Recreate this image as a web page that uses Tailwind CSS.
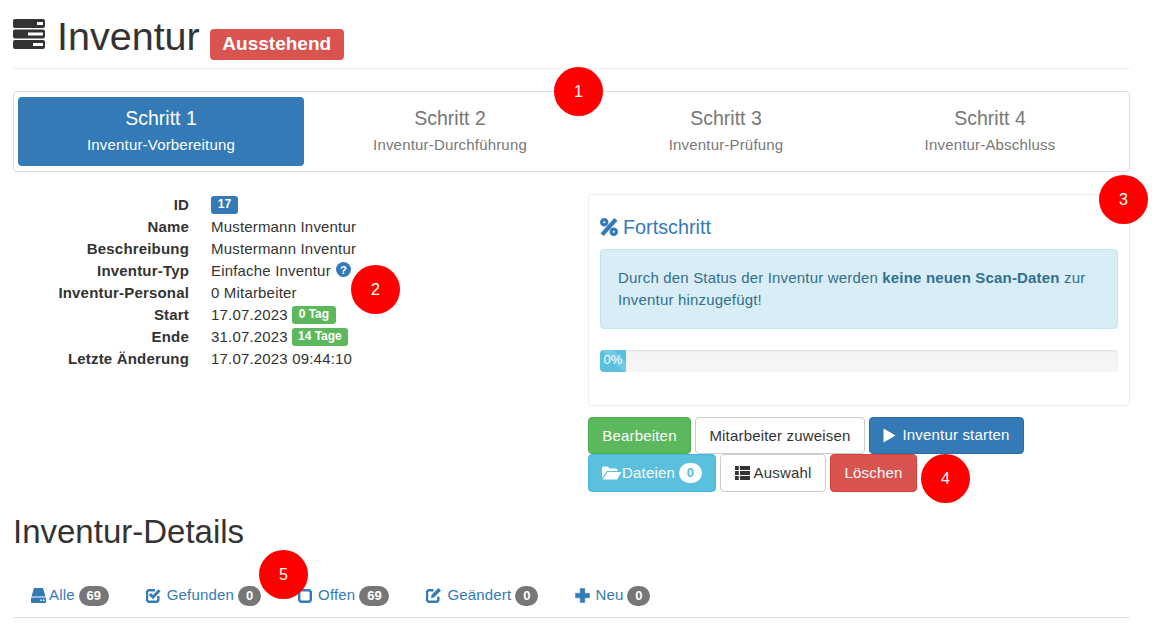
<!DOCTYPE html>
<html lang="de">
<head>
<meta charset="utf-8">
<script src="https://cdn.jsdelivr.net/npm/@tailwindcss/browser@4"></script>
</head>
<body class="bg-white overflow-hidden font-['Liberation_Sans',Arial,sans-serif] text-[15px] tracking-[0.18px] text-[#333]">
<div class="relative w-[1152px] h-[639px] overflow-hidden">
  <div class="w-[1117px] ml-[13px]">
    <!-- header -->
    <div class="h-[69px] border-b border-[#eee] flex items-start pt-[12px]">
      <svg class="w-[32px] h-[30px] mt-[7px]" viewBox="0 0 32 30"><path fill="#333" fill-rule="evenodd" d="M2 0H30a2 2 0 0 1 2 2V7a2 2 0 0 1-2 2H2a2 2 0 0 1-2-2V2a2 2 0 0 1 2-2ZM24 3v3h6V3ZM2 10.500H30a2 2 0 0 1 2 2V17.500a2 2 0 0 1-2 2H2a2 2 0 0 1-2-2V12.500a2 2 0 0 1 2-2ZM15 13.500v3h15v-3ZM2 21H30a2 2 0 0 1 2 2V28a2 2 0 0 1-2 2H2a2 2 0 0 1-2-2V23a2 2 0 0 1 2-2ZM20 24v3h10v-3Z"/></svg>
      <h1 class="text-[39.500px] tracking-normal leading-[48px] ml-[12px] text-[#333]">Inventur</h1>
      <span class="ml-[10px] mt-[17px] h-[31px] w-[134px] rounded-[4px] bg-[#d9534f] text-white font-bold text-[19px] tracking-normal leading-[29px] text-center">Ausstehend</span>
    </div>
    <!-- steps -->
    <div class="mt-[22px] h-[81px] border border-[#ddd] rounded-[4px] py-[5px] pl-[4px] flex">
      <div class="w-[286px] h-[69px] rounded-[4px] bg-[#337ab7] text-white text-center pt-[9px]">
        <div class="text-[19.500px] tracking-normal leading-[24px]">Schritt 1</div>
        <div class="leading-[20px] mt-[5px]">Inventur-Vorbereitung</div>
      </div>
      <div class="w-[292px] text-[#777] text-center pt-[9px]">
        <div class="text-[19.500px] tracking-normal leading-[24px]">Schritt 2</div>
        <div class="leading-[20px] mt-[5px]">Inventur-Durchführung</div>
      </div>
      <div class="w-[260px] text-[#777] text-center pt-[9px]">
        <div class="text-[19.500px] tracking-normal leading-[24px]">Schritt 3</div>
        <div class="leading-[20px] mt-[5px]">Inventur-Prüfung</div>
      </div>
      <div class="w-[268px] text-[#777] text-center pt-[9px]">
        <div class="text-[19.500px] tracking-normal leading-[24px]">Schritt 4</div>
        <div class="leading-[20px] mt-[5px]">Inventur-Abschluss</div>
      </div>
    </div>
    <!-- two columns -->
    <div class="flex mt-[22px]">
      <div class="w-[575px] leading-[22px]">
        <div class="flex"><div class="w-[176px] text-right font-bold">ID</div><div class="ml-[22px] flex items-center"><span class="h-[18px] w-[27px] rounded-[3px] bg-[#337ab7] text-white text-[12px] tracking-normal font-bold leading-[17px] text-center">17</span></div></div>
        <div class="flex"><div class="w-[176px] text-right font-bold">Name</div><div class="ml-[22px]">Mustermann Inventur</div></div>
        <div class="flex"><div class="w-[176px] text-right font-bold">Beschreibung</div><div class="ml-[22px]">Mustermann Inventur</div></div>
        <div class="flex"><div class="w-[176px] text-right font-bold">Inventur-Typ</div><div class="ml-[22px] flex items-center">Einfache Inventur
          <svg class="w-[15px] h-[15px] ml-[5px] -mt-[3px]" viewBox="0 0 16 16"><circle cx="8" cy="8" r="8" fill="#337ab7"/><text x="8" y="12.500" text-anchor="middle" font-size="12" font-weight="700" font-family="Liberation Sans" fill="#fff">?</text></svg></div></div>
        <div class="flex"><div class="w-[176px] text-right font-bold">Inventur-Personal</div><div class="ml-[22px]">0 Mitarbeiter</div></div>
        <div class="flex"><div class="w-[176px] text-right font-bold">Start</div><div class="ml-[22px] flex items-center">17.07.2023<span class="ml-[4px] h-[18px] w-[44px] rounded-[3px] bg-[#5cb85c] text-white text-[12px] tracking-normal font-bold leading-[17px] text-center">0 Tag</span></div></div>
        <div class="flex"><div class="w-[176px] text-right font-bold">Ende</div><div class="ml-[22px] flex items-center">31.07.2023<span class="ml-[4px] h-[18px] w-[56px] rounded-[3px] bg-[#5cb85c] text-white text-[12px] tracking-normal font-bold leading-[17px] text-center">14 Tage</span></div></div>
        <div class="flex"><div class="w-[176px] text-right font-bold">Letzte Änderung</div><div class="ml-[22px]">17.07.2023 09:44:10</div></div>
      </div>
      <div class="w-[542px]">
        <!-- progress panel -->
        <div class="h-[212px] border border-[#eee] rounded-[3px] px-[11px] pt-[19px]">
          <div class="flex items-center text-[#337ab7] h-[26px]">
            <svg class="w-[18px] h-[18px]" viewBox="0 0 17 17"><g fill="none" stroke="#337ab7" stroke-width="3"><circle cx="4" cy="4" r="2.500"/><circle cx="13" cy="13" r="2.500"/></g><path d="M13.500 0L16.500 2.500L3.500 17L0.500 14.500Z" fill="#337ab7"/></svg>
            <span class="text-[19.800px] tracking-normal leading-[26px] ml-[5px]">Fortschritt</span>
          </div>
          <div class="mt-[9px] h-[80px] rounded-[4px] border border-[#bce8f1] bg-[#d9edf7] text-[#31708f] leading-[22px] px-[17px] pt-[17px]">
            Durch den Status der Inventur werden <b>keine neuen Scan-Daten</b> zur Inventur hinzugefügt!
          </div>
          <div class="mt-[21px] h-[22px] rounded-[4px] bg-[#f5f5f5] shadow-[inset_0_1px_2px_rgba(0,0,0,0.1)] overflow-hidden">
            <div class="h-[22px] w-[26px] bg-[#5bc0de] bg-[linear-gradient(45deg,rgba(255,255,255,0)_50%,rgba(255,255,255,0.15)_50%,rgba(255,255,255,0.15)_75%,rgba(255,255,255,0)_75%)] text-white text-[13px] tracking-normal leading-[20px] text-center">0%</div>
          </div>
        </div>
        <!-- buttons -->
        <div class="flex gap-[4px] mt-[11px]">
          <div class="h-[37px] w-[103px] rounded-[4px] bg-[#5cb85c] border border-[#4cae4c] text-white leading-[35px] text-center">Bearbeiten</div>
          <div class="h-[37px] w-[170px] rounded-[4px] bg-white border border-[#ccc] text-[#333] leading-[35px] text-center">Mitarbeiter zuweisen</div>
          <div class="h-[37px] w-[155px] rounded-[4px] bg-[#337ab7] border border-[#2e6da4] text-white flex items-center justify-center">
            <svg class="w-[13px] h-[15px] mr-[6px]" viewBox="0 0 13 15"><path d="M0.500 0.500L12.500 7.500L0.500 14.500Z" fill="#fff"/></svg>Inventur starten</div>
        </div>
        <div class="flex gap-[4px]">
          <div class="h-[38px] w-[128px] rounded-[4px] bg-[#5bc0de] border border-[#46b8da] text-white flex items-center justify-center">
            <svg class="w-[20px] h-[14px]" viewBox="0 0 20 14"><path d="M0 12V2a1.500 1.500 0 0 1 1.500-1.500H6L7.500 2.500H14a1.500 1.500 0 0 1 1.500 1.500V5H5L0 12Z M5.500 6H19.500L15 13.500H0.500Z" fill="#fff"/></svg>Dateien<span class="ml-[4px] h-[20px] w-[23px] rounded-full bg-white text-[#5bc0de] text-[13px] tracking-normal font-bold leading-[20px] text-center">0</span></div>
          <div class="h-[38px] w-[106px] rounded-[4px] bg-white border border-[#ccc] text-[#333] flex items-center justify-center">
            <svg class="w-[15px] h-[14px] mr-[4px]" viewBox="0 0 15 14"><path d="M0 0H3.800V4H0ZM5 0H15V4H5ZM0 5H3.800V9H0ZM5 5H15V9H5ZM0 10H3.800V14H0ZM5 10H15V14H5Z" fill="#333"/></svg>Auswahl</div>
          <div class="h-[38px] w-[87px] rounded-[4px] bg-[#d9534f] border border-[#d43f3a] text-white leading-[36px] text-center">Löschen</div>
        </div>
      </div>
    </div>
    <h2 class="text-[33px] tracking-normal leading-[40px] mt-[20px] text-[#333]">Inventur-Details</h2>
    <!-- tabs -->
    <div class="mt-[21px] h-[45px] border-b border-[#ddd] flex items-center text-[#337ab7] pt-[1px]">
      <div class="flex items-center ml-[18px]">
        <svg class="w-[15px] h-[15px] mr-[3px]" viewBox="0 0 15 15"><path fill="#337ab7" fill-rule="evenodd" d="M3 0H12L14.500 8.500H0.500Z M1 9.500H14a1 1 0 0 1 1 1V14a1 1 0 0 1-1 1H1a1 1 0 0 1-1-1V10.500a1 1 0 0 1 1-1ZM9.500 11.500v1.500h1.500v-1.500ZM12 11.500v1.500h1.500v-1.500Z"/></svg>Alle<span class="ml-[4px] h-[20px] w-[30px] rounded-full bg-[#777] text-white text-[13px] tracking-normal font-bold leading-[20px] text-center">69</span></div>
      <div class="flex items-center ml-[37px]">
        <svg class="w-[15px] h-[15px] mr-[6px]" viewBox="0 0 15 15"><path d="M12.300 8v3.700a2 2 0 0 1-2 2H3a2 2 0 0 1-2-2V4.300a2 2 0 0 1 2-2H9" fill="none" stroke="#337ab7" stroke-width="2.400"/><path d="M3.800 6L7 9.200L13.500 2.200" fill="none" stroke="#337ab7" stroke-width="3"/></svg>Gefunden<span class="ml-[4px] h-[20px] w-[23px] rounded-full bg-[#777] text-white text-[13px] tracking-normal font-bold leading-[20px] text-center">0</span></div>
      <div class="flex items-center ml-[37px]">
        <svg class="w-[14px] h-[14px] mr-[6px]" viewBox="0 0 14 14"><rect x="1.200" y="1.200" width="11.600" height="11.600" rx="2.500" fill="none" stroke="#337ab7" stroke-width="2.400"/></svg>Offen<span class="ml-[4px] h-[20px] w-[30px] rounded-full bg-[#777] text-white text-[13px] tracking-normal font-bold leading-[20px] text-center">69</span></div>
      <div class="flex items-center ml-[37px]">
        <svg class="w-[15px] h-[15px] mr-[6px]" viewBox="0 0 15 15"><path d="M12.300 8.500v3.200a2 2 0 0 1-2 2H3a2 2 0 0 1-2-2V4.300a2 2 0 0 1 2-2H7.500" fill="none" stroke="#337ab7" stroke-width="2.400"/><path d="M12.500 0L15 2.500L8 9.500L5 10L5.500 7Z" fill="#337ab7"/></svg>Geändert<span class="ml-[4px] h-[20px] w-[23px] rounded-full bg-[#777] text-white text-[13px] tracking-normal font-bold leading-[20px] text-center">0</span></div>
      <div class="flex items-center ml-[37px]">
        <svg class="w-[15px] h-[15px] mr-[5px]" viewBox="0 0 15 15"><path d="M5.200 0.500H9.800V5.200H14.500V9.800H9.800V14.500H5.200V9.800H0.500V5.200H5.200Z" fill="#337ab7" stroke="#337ab7" stroke-width="0.500"/></svg>Neu<span class="ml-[4px] h-[20px] w-[23px] rounded-full bg-[#777] text-white text-[13px] tracking-normal font-bold leading-[20px] text-center">0</span></div>
    </div>
  </div>
  <!-- annotation markers -->
  <div class="absolute left-[554px] top-[67px] w-[49px] h-[49px] rounded-full bg-[#ff0000] text-white text-[16px] leading-[49px] text-center">1</div>
  <div class="absolute left-[351px] top-[265px] w-[49px] h-[49px] rounded-full bg-[#ff0000] text-white text-[16px] leading-[49px] text-center">2</div>
  <div class="absolute left-[1099px] top-[175px] w-[49px] h-[49px] rounded-full bg-[#ff0000] text-white text-[16px] leading-[49px] text-center">3</div>
  <div class="absolute left-[921px] top-[454px] w-[49px] h-[49px] rounded-full bg-[#ff0000] text-white text-[16px] leading-[49px] text-center">4</div>
  <div class="absolute left-[259px] top-[550px] w-[49px] h-[49px] rounded-full bg-[#ff0000] text-white text-[16px] leading-[49px] text-center">5</div>
</div>
</body>
</html>
